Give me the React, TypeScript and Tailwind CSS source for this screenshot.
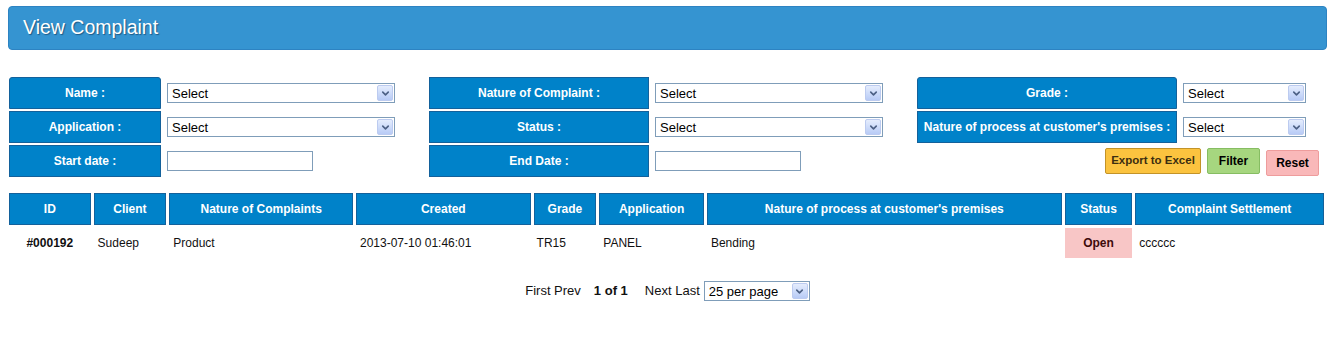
import { ChevronDown } from "lucide-react"

const font = { fontFamily: "'Liberation Sans', Arial, sans-serif" }

function FakeSelect({ width, label = "Select", size = "text-[13px]" }: { width: string; label?: string; size?: string }) {
  return (
    <div className={`${width} h-[20px] flex items-center justify-between border border-[#7f9db9] bg-white pl-[4px] pr-[1px]`}>
      <span className={`${size} text-black leading-none`}>{label}</span>
      <span className="w-[16px] h-[16px] flex items-center justify-center rounded-[2px] border border-[#bccbf0] bg-gradient-to-b from-[#e5edfd] to-[#b8cbf6]">
        <ChevronDown className="w-[11px] h-[11px] text-[#4d6185]" strokeWidth={3.5} />
      </span>
    </div>
  )
}

function TextBox({ width }: { width: string }) {
  return <div className={`${width} h-[20px] border border-[#7f9db9] bg-white`} />
}

function Label({ children, rounded }: { children: React.ReactNode; rounded?: boolean }) {
  return (
    <div
      className={`h-[32px] flex items-center justify-center bg-[#0082c9] border border-[#13619b] text-white text-[12px] font-bold ${rounded ? "rounded-t-[3px]" : ""}`}
    >
      {children}
    </div>
  )
}

const columns = [
  { title: "ID", w: "w-[82px]" },
  { title: "Client", w: "w-[73px]" },
  { title: "Nature of Complaints", w: "w-[185px]" },
  { title: "Created", w: "w-[176px]" },
  { title: "Grade", w: "w-[63px]" },
  { title: "Application", w: "w-[105px]" },
  { title: "Nature of process at customer's premises", w: "w-[358px]" },
  { title: "Status", w: "w-[68px]" },
  { title: "Complaint Settlement", w: "w-[190px]" },
]

export default function App() {
  return (
    <div className="min-h-[347px] bg-white pl-[8px] pr-[10px] pt-[6px]" style={font}>
      <div className="h-[44px] flex items-center rounded-[4px] border border-[#2d83c2] bg-[#3594d1] pl-[14px]">
        <h1 className="text-[19.5px] text-white [text-shadow:1px_1px_1px_#1e5a85]">View Complaint</h1>
      </div>

      <div className="ml-[1px] mt-[27px] grid grid-cols-[152px_268px_220px_268px_260px_1fr] gap-y-[2px]">
        <Label rounded>Name :</Label>
        <div className="flex items-center pl-[6px]"><FakeSelect width="w-[228px]" /></div>
        <Label>Nature of Complaint :</Label>
        <div className="flex items-center pl-[6px]"><FakeSelect width="w-[228px]" /></div>
        <Label rounded>Grade :</Label>
        <div className="flex items-center pl-[6px]"><FakeSelect width="w-[123px]" /></div>

        <Label>Application :</Label>
        <div className="flex items-center pl-[6px]"><FakeSelect width="w-[228px]" /></div>
        <Label>Status :</Label>
        <div className="flex items-center pl-[6px]"><FakeSelect width="w-[228px]" /></div>
        <Label>Nature of process at customer's premises :</Label>
        <div className="flex items-center pl-[6px]"><FakeSelect width="w-[123px]" /></div>

        <Label>Start date :</Label>
        <div className="flex items-center pl-[6px]"><TextBox width="w-[146px]" /></div>
        <Label>End Date :</Label>
        <div className="flex items-center pl-[6px]"><TextBox width="w-[146px]" /></div>
        <div className="col-span-2 flex items-center justify-end gap-[6px] pr-[8px]">
          <button className="h-[26px] w-[96px] rounded-[2px] border border-[#c39328] bg-[#fbc33f] text-[#3b2e10] text-[11.5px] font-bold">Export to Excel</button>
          <button className="h-[26px] w-[53px] rounded-[2px] border border-[#86bd62] bg-[#a6d67f] text-black text-[12px] font-bold">Filter</button>
          <button className="h-[26px] w-[53px] mt-[3px] rounded-[2px] border border-[#ee9c9c] bg-[#f9b8b9] text-black text-[12px] font-bold">Reset</button>
        </div>
      </div>

      <table className="mt-[13px] border-separate border-spacing-[3px] -ml-[2px] text-[12px]">
        <thead>
          <tr>
            {columns.map((c) => (
              <th key={c.title} className={`${c.w} h-[32px] bg-[#0082c9] border border-[#13619b] text-white font-bold text-center`}>
                {c.title}
              </th>
            ))}
          </tr>
        </thead>
        <tbody>
          <tr className="h-[30px] text-[#111]">
            <td className="text-center font-bold">#000192</td>
            <td className="pl-[4px]">Sudeep</td>
            <td className="pl-[4px]">Product</td>
            <td className="pl-[4px]">2013-07-10 01:46:01</td>
            <td className="pl-[3px]">TR15</td>
            <td className="pl-[4px]">PANEL</td>
            <td className="pl-[4px]">Bending</td>
            <td className="bg-[#f8c6c6] text-[#3d0b0b] font-bold text-center">Open</td>
            <td className="pl-[4px]">cccccc</td>
          </tr>
        </tbody>
      </table>

      <div className="mt-[20px] flex items-center justify-center text-[13px] text-[#111]">
        <span>First Prev</span>
        <span className="ml-[13px] font-bold">1 of 1</span>
        <span className="ml-[17px] mr-[4px]">Next Last</span>
        <FakeSelect width="w-[106px]" label="25 per page" size="text-[13px]" />
      </div>
    </div>
  )
}
